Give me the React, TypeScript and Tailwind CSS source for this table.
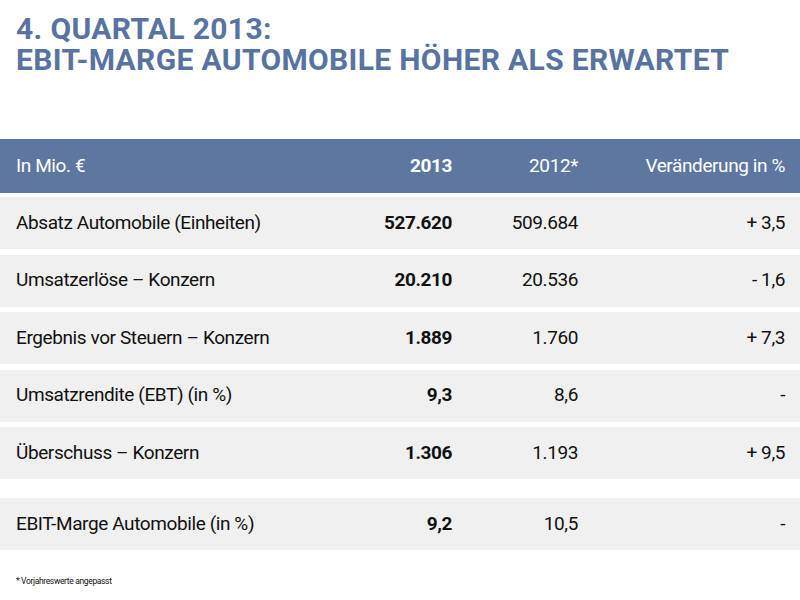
import React from "react";

const rows = [
  { label: "Absatz Automobile (Einheiten)", a: "527.620", b: "509.684", c: "+ 3,5" },
  { label: "Umsatzerlöse – Konzern", a: "20.210", b: "20.536", c: "- 1,6" },
  { label: "Ergebnis vor Steuern – Konzern", a: "1.889", b: "1.760", c: "+ 7,3" },
  { label: "Umsatzrendite (EBT) (in %)", a: "9,3", b: "8,6", c: "-" },
  { label: "Überschuss – Konzern", a: "1.306", b: "1.193", c: "+ 9,5" }
];

function Row({ label, a, b, c }: { label: string; a: string; b: string; c: string }) {
  return (
    <div className="flex items-center h-[52px] bg-[#f0f0f0] pl-4 pr-[15px] text-[19px] tracking-[-0.4px] text-[#111]">
      <div className="flex-1">{label}</div>
      <div className="w-[100px] text-right font-bold">{a}</div>
      <div className="w-[126px] text-right">{b}</div>
      <div className="w-[207px] text-right">{c}</div>
    </div>
  );
}

export default function App() {
  return (
    <div
      className="w-[800px] h-[600px] bg-white overflow-hidden"
      style={{ fontFamily: 'Roboto, "Liberation Sans", sans-serif' }}>
      <div className="pt-[13px] pl-4 text-[30px] leading-[31px] tracking-[0.35px] font-bold text-[#5873a2] uppercase">
        <div>4. Quartal 2013:</div>
        <div>EBIT-Marge Automobile höher als erwartet</div>
      </div>

      <div className="mt-[64px]">
        <div className="flex items-center h-[54px] bg-[#5e77a0] pl-4 pr-[15px] text-[19px] tracking-[-0.4px] text-white">
          <div className="flex-1">In Mio. €</div>
          <div className="w-[100px] text-right font-bold">2013</div>
          <div className="w-[126px] text-right">2012*</div>
          <div className="w-[207px] text-right">Veränderung in %</div>
        </div>

        <div className="flex flex-col gap-[5.5px] mt-[4px]">
          {rows.map((r) => (
            <Row key={r.label} {...r} />
          ))}
        </div>

        <div className="mt-[19px]">
          <Row label="EBIT-Marge Automobile (in %)" a="9,2" b="10,5" c="-" />
        </div>

        <div className="pl-4 mt-[25px] text-[8.5px] tracking-[-0.35px] text-[#111]">* Vorjahreswerte angepasst</div>
      </div>
    </div>
  );
}
